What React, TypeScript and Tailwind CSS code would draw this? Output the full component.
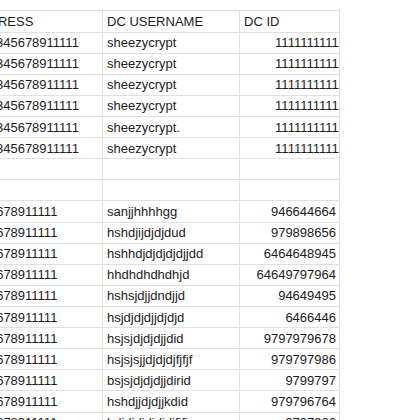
import React from 'react';

const upper = [
  { addr: '12345678911111', user: 'sheezycrypt', id: '11111111111' },
  { addr: '12345678911111', user: 'sheezycrypt', id: '11111111111' },
  { addr: '12345678911111', user: 'sheezycrypt', id: '11111111111' },
  { addr: '12345678911111', user: 'sheezycrypt', id: '11111111111' },
  { addr: '12345678911111', user: 'sheezycrypt.', id: '11111111111' },
  { addr: '12345678911111', user: 'sheezycrypt', id: '11111111111' },
];

const lower = [
  { addr: '12345678911111', user: 'sanjjhhhhgg', id: '946644664' },
  { addr: '12345678911111', user: 'hshdjijdjdjdud', id: '979898656' },
  { addr: '12345678911111', user: 'hshhdjdjdjdjdjjdd', id: '6464648945' },
  { addr: '12345678911111', user: 'hhdhdhdhdhjd', id: '64649797964' },
  { addr: '12345678911111', user: 'hshsjdjjdndjjd', id: '94649495' },
  { addr: '12345678911111', user: 'hsjdjdjdjjdjdjd', id: '6466446' },
  { addr: '12345678911111', user: 'hsjsjdjdjdjjdid', id: '9797979678' },
  { addr: '12345678911111', user: 'hsjsjsjjdjdjdjfjfjf', id: '979797986' },
  { addr: '12345678911111', user: 'bsjsjdjdjdjjdirid', id: '9799797' },
  { addr: '12345678911111', user: 'hshdjjdjdjjkdid', id: '979796764' },
  { addr: '12345678911111', user: 'hdjdjdjdjdjdjfjfj', id: '9797966' },
];

const Row: React.FC<{ addr?: string; user?: string; id?: string; overflow?: boolean; upperAddr?: boolean }> = ({ addr, user, id, overflow, upperAddr }) => (
  <div className="flex h-[21.12px] border-b border-[#e0e0e0]">
    <div className="w-[103px] shrink-0 border-r border-[#e0e0e0] overflow-hidden flex items-center whitespace-nowrap">
      {addr && <span className={upperAddr ? 'ml-[-18.5px]' : 'ml-[-40px]'}>{addr}</span>}
    </div>
    <div className="w-[137px] shrink-0 border-r border-[#e0e0e0] overflow-hidden flex items-center px-1 whitespace-nowrap">
      {user}
    </div>
    <div className="w-[100px] shrink-0 border-r border-[#e0e0e0] overflow-hidden flex items-center justify-end pr-[3px] whitespace-nowrap">
      {id && <span className={overflow ? 'mr-[-9px]' : ''}>{id}</span>}
    </div>
  </div>
);

export default function App() {
  return (
    <div className="w-[420px] h-[420px] overflow-hidden bg-white pt-[10px] text-[13px] leading-none text-[#1c1c1c] font-['Liberation_Sans',Arial,sans-serif]">
      <div className="w-[340px] border-t border-[#e0e0e0]">
        <div className="flex h-[21.6px] border-b border-[#e0e0e0]">
          <div className="w-[103px] shrink-0 border-r border-[#e0e0e0] overflow-hidden flex items-center whitespace-nowrap">
            <span className="ml-[-29.5px]">ADDRESS</span>
          </div>
          <div className="w-[137px] shrink-0 border-r border-[#e0e0e0] flex items-center px-1">DC USERNAME</div>
          <div className="w-[100px] shrink-0 border-r border-[#e0e0e0] flex items-center px-1">DC ID</div>
        </div>
        {upper.map((r, i) => (
          <Row key={'u' + i} addr={r.addr} user={r.user} id={r.id} overflow upperAddr />
        ))}
        <Row />
        <Row />
        {lower.map((r, i) => (
          <Row key={'l' + i} addr={r.addr} user={r.user} id={r.id} />
        ))}
      </div>
    </div>
  );
}
